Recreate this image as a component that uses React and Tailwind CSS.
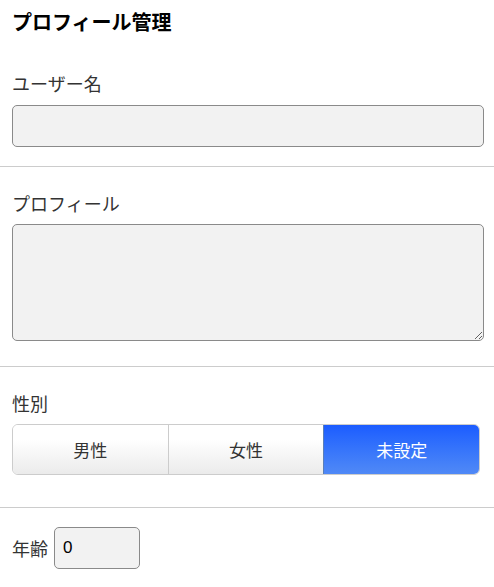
import { useState } from 'react'

const FONT = 'font-["Noto_Sans_CJK_JP","Noto_Sans",sans-serif]'

const GENDERS = ['男性', '女性', '未設定']

function Segmented({ value, onChange }) {
  return (
    <div className="flex h-[51px] w-[468px] overflow-hidden rounded-[6px] border border-[#cccccc]">
      {GENDERS.map((g, i) => {
        const active = g === value
        return (
          <button
            key={g}
            type="button"
            onClick={() => onChange(g)}
            className={
              active
                ? 'flex-1 border-l border-[#5a7fb8] bg-gradient-to-b from-[#1c5cff] to-[#5089f6] text-[17px] text-white'
                : `flex-1 bg-gradient-to-b from-white from-30% to-[#ebebeb] text-[17px] text-[#333] ${i > 0 ? 'border-l border-[#cccccc]' : ''}`
            }
          >
            {g}
          </button>
        )
      })}
    </div>
  )
}

export default function App() {
  const [gender, setGender] = useState('未設定')
  return (
    <div className={`${FONT} w-[494px] bg-white text-[#333]`}>
      <section className="px-3 pt-[8px] pb-[19px]">
        <h1 className="text-[20px] leading-[28px] font-bold text-black">プロフィール管理</h1>
        <label className="mt-[35px] block text-[18px] leading-[25px]">ユーザー名</label>
        <input className="mt-[9px] block h-[42px] w-[472px] rounded-[5px] border border-[#8a8a8a] bg-[#f2f2f2] px-2 outline-none" />
      </section>
      <hr className="border-[#cccccc]" />
      <section className="px-3 pt-[24px] pb-[25px]">
        <label className="block text-[18px] leading-[25px]">プロフィール</label>
        <textarea className="mt-2 block h-[117px] w-[472px] rounded-[5px] border border-[#8a8a8a] bg-[#f2f2f2] px-2 outline-none" />
      </section>
      <hr className="border-[#cccccc]" />
      <section className="px-3 pt-[24px] pb-[32px]">
        <label className="block text-[18px] leading-[25px]">性別</label>
        <div className="mt-2">
          <Segmented value={gender} onChange={setGender} />
        </div>
      </section>
      <hr className="border-[#cccccc]" />
      <section className="flex items-center gap-[6px] px-3 pt-[19px] pb-5">
        <label className="text-[18px] leading-[25px]">年齢</label>
        <input
          defaultValue="0"
          className='h-[42px] w-[86px] rounded-[5px] border border-[#8a8a8a] bg-[#f2f2f2] px-2 font-["Liberation_Sans",sans-serif] text-[17px] text-black outline-none'
        />
      </section>
    </div>
  )
}
